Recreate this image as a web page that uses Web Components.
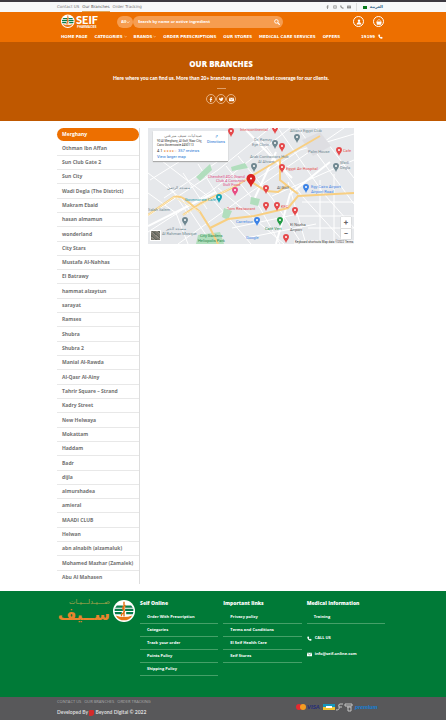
<!DOCTYPE html>
<html lang="en">
<head>
<meta charset="utf-8">
<meta name="viewport" content="width=device-width, initial-scale=1">
<title>Our Branches</title>
<style>
html{background:#58585a}
body{margin:0;background:#fff;font-family:"Open Sans","Noto Sans",sans-serif;
--orange:#ed6f00;--green:#007a37}
</style>
</head>
<body>
<seif-topbar></seif-topbar>
<seif-header></seif-header>
<page-banner><span slot="title">OUR BRANCHES</span>Here where you can find us. More than 20+ branches to provide the best coverage for our clients.</page-banner>
<page-main></page-main>
<seif-footer></seif-footer>
<seif-bottom></seif-bottom>
<script>
const BASE=`*{box-sizing:border-box}:host{display:block}a{color:inherit;text-decoration:none}ul{list-style:none;margin:0;padding:0}svg{display:block}
.wrap{max-width:332px;margin:0 auto;padding-right:4px;position:relative}`;
function define(name,css,html,init){
  customElements.define(name,class extends HTMLElement{
    constructor(){super();this.attachShadow({mode:'open'}).innerHTML='<style>'+BASE+css+'</style>'+html;}
    connectedCallback(){if(init)init.call(this,this.shadowRoot);}
  });
}
const F='<path d="M9 5h3V1H9C6 1 5 3 5 5v3H3v4h2v8h4v-8h3l1-4H9V6q0-1 0-1z"/>';
const TW='<path d="M1 16c6 3 15 0 15-9l2-3-2 .5L17 2l-3 1c-3-2-6 0-5 3-4 0-6-2-8-4-1 3 0 5 1 6l-2-.5c0 3 2 4 3 4.500H3c1 2 2 3 4 3-2 1-4 1.500-6 1z"/>';
const MAIL='<path d="M0 3h20v14H0z"/><path d="M1 4l9 7 9-7" fill="none" stroke="var(--bg)" stroke-width="2"/>';
const PHONE='<path d="M5 1 1 4c0 8 7 15 15 15l3-4-5-4-3 2c-2-1-3-2-4-4l2-3z"/>';
const LOGO=`<circle cx="20" cy="20" r="20" fill="#fff"/><path d="M7 10h11v4H4zM22 10h11l3 4H22zM3 16h15v4H3zM22 16h15v4H22zM3 22h13v4H4zM24 22h13l-1 4H24z" fill="#087c4a"/><path d="M20 3v27M16 29c-4-4 8-6 4-10s-2-8 3-9" fill="none" stroke="#e06d10" stroke-width="2.500"/><path d="M5 28q15 6 30 0c-6 12-24 12-30 0z" fill="#e97818"/>`;

define('seif-icon',`:host{width:5px;height:5px;flex:none}svg{width:100%;height:100%;fill:currentColor}`,'<svg viewBox="0 0 20 20"></svg>',function(r){
  r.querySelector('svg').innerHTML={f:F,tw:TW,mail:MAIL,phone:PHONE,
    insta:'<path d="M2 2h16v16H2zM6 6v8h8V6z" fill-rule="evenodd"/>',
    search:'<circle cx="8" cy="8" r="6" fill="none" stroke="currentColor" stroke-width="3"/><path d="m12 12 7 7" stroke="currentColor" stroke-width="4"/>',
    user:'<circle cx="10" cy="6" r="4"/><path d="M2 18c0-5 4-8 8-8s8 3 8 8z"/>',
    basket:'<path d="M5 8c0-8 10-8 10 0" fill="none" stroke="currentColor" stroke-width="2"/><path d="M1 8h18l-2 11H3z"/>',
    down:'<path d="m3 7 7 7 7-7" fill="none" stroke="currentColor" stroke-width="3"/>'}[this.getAttribute('name')];
});

define('seif-topbar',`:host{background:#f7f8f9;border-top:2px solid #3c3941;color:#777;--bg:#f7f8f9}
.wrap{display:flex;justify-content:space-between}nav,.r{display:flex;gap:3px;align-items:center;height:10px}
nav{font:4px/10px "DejaVu Sans",sans-serif}.on{box-shadow:inset 0 -1px #e0a55a;color:#555}
.r{color:#888;padding-right:2px}.r seif-icon{width:4px;height:4px}.sep{border-left:1px solid #ddd;height:8px;margin:0 3px 0 2px}.flag{width:4px;height:3px;background:#087a1c}.ar{color:#2d6285;font:bold 4px/10px "DejaVu Sans",sans-serif}`,
`<div class="wrap"><nav><a href="#">Contact US</a><a class="on" href="#">Our Branches</a><a href="#">Order Tracking</a></nav>
<div class="r"><seif-icon name="f"></seif-icon><seif-icon name="insta"></seif-icon><seif-icon name="phone"></seif-icon><seif-icon name="mail"></seif-icon><span class="sep"></span><span class="flag"></span><a class="ar" href="#" lang="ar">العربية</a></div></div>`);

define('seif-logo',`:host{width:40px;height:15px;flex:none}svg{width:100%;height:100%}text{font:900 11px Lato,sans-serif;fill:#fff}.s{font:bold 3px "Open Sans",sans-serif}`,
`<svg viewBox="0 0 40 15" role="img" aria-label="Seif Pharmacies"><g transform="translate(0 .5) scale(.34)">${LOGO}</g><text x="15" y="10">SEIF</text><text class="s" x="16" y="14">PHARMACIES</text></svg>`);

define('seif-header',`:host{background:var(--orange);color:#fff;--bg:var(--orange)}
.row{display:flex;align-items:center;height:19px;padding:0 1px 0 4px}
form{display:flex;margin-left:16px;flex:0 1 166px}
select{appearance:none;border:0;background:#f69d50;color:#fff;font:bold 4px "Open Sans",sans-serif;width:16px;height:12px;border-radius:6px;padding:0 4px;margin:0}
.cat{position:relative;display:flex}.cat seif-icon{position:absolute;right:3px;top:4px;width:4px;height:4px}
.box{display:flex;align-items:center;flex:1;min-width:0;background:#f69d50;border-radius:6px;height:12px;padding:0 3px 0 5px}
input{border:0;background:none;outline:0;color:#fff;font:bold 4px "Open Sans",sans-serif;padding:0;flex:1;min-width:0}input::placeholder{color:#fff;opacity:1}
button{border:0;background:none;color:#fff;padding:0;display:flex}button seif-icon{width:6px;height:6px}
.acts{margin-left:auto;display:flex;gap:9px}.acts button{width:11px;height:11px;border:1px solid #fff;border-radius:50%;align-items:center;justify-content:center}
.menu{display:flex;gap:7px;height:11px;align-items:center;padding:0 2px 0 4px;font:bold 4px/11px "DejaVu Sans",sans-serif;white-space:nowrap}.menu a{display:flex;align-items:center;gap:1px}.menu seif-icon{width:3px;height:3px}.menu .tel seif-icon{width:5px;height:5px}.menu .tel{margin-left:auto;gap:3px}`,
`<div class="wrap"><div class="row"><seif-logo></seif-logo><form onsubmit="return false"><span class="cat"><select aria-label="Category"><option>All</option></select><seif-icon name="down"></seif-icon></span><span class="box"><input aria-label="Search" placeholder="Search by name or active ingredient"><button aria-label="Search"><seif-icon name="search"></seif-icon></button></span></form>
<div class="acts"><button aria-label="Account"><seif-icon name="user"></seif-icon></button><button aria-label="Cart"><seif-icon name="basket"></seif-icon></button></div></div>
<nav class="menu"><a href="#">HOME PAGE</a><a href="#">CATEGORIES <seif-icon name="down"></seif-icon></a><a href="#">BRANDS <seif-icon name="down"></seif-icon></a><a href="#">ORDER PRESCRIPTIONS</a><a href="#">OUR STORES</a><a href="#">MEDICAL CARE SERVICES</a><a href="#">OFFERS</a><a class="tel" href="#">19199 <seif-icon name="phone"></seif-icon></a></nav></div>`);

define('page-banner',`:host{background:#bf5800;color:#fff;text-align:center;padding:16px 4px 17px 0;--bg:#bf5800}
h1{margin:0;font:800 8px/12px "Open Sans",sans-serif}p{margin:2px 0 0;font:900 5px/12px Lato,sans-serif}hr{width:9px;border:0;border-top:1px solid #df9f68;margin:4px auto 5px}
div{display:flex;justify-content:center}a{width:10px;height:10px;border:1px solid #e7b080;border-radius:50%;display:flex;align-items:center;justify-content:center;color:#fff}`,
`<h1><slot name="title"></slot></h1><p><slot></slot></p><hr><div><a href="#" aria-label="Facebook"><seif-icon name="f"></seif-icon></a><a href="#" aria-label="Twitter"><seif-icon name="tw"></seif-icon></a><a href="#" aria-label="Email"><seif-icon name="mail"></seif-icon></a></div>`);

define('branch-list',`:host{width:83px;flex:none;border-right:1px solid #ddd}
ul{display:flex;flex-direction:column;min-height:456px;font:bold 5px/13px "Open Sans",sans-serif;color:#727272}
li{flex:1;display:flex;flex-direction:column;justify-content:flex-end;border-bottom:1px solid #e8e8e8}li:last-child{border:0}a{display:block;padding-left:5px;white-space:nowrap}li.on{border:0;justify-content:flex-start}.on a{background:var(--orange);color:#fff;border-radius:7px}`,'<ul></ul>',function(r){
 r.querySelector('ul').innerHTML=['Merghany','Othman Ibn Affan','Sun Club Gate 2','Sun City','Wadi Degla (The District)','Makram Ebaid','hasan almamun','wonderland','City Stars','Mustafa Al-Nahhas','El Batrawy','hammat alzaytun','sarayat','Ramses','Shubra','Shubra 2','Manial Al-Rawda','Al-Qasr Al-Ainy','Tahrir Square – Strand','Kadry Street','New Helwaya','Mokattam','Haddam','Badr','dijla','almurshadea','amieral','MAADI CLUB','Helwan','abn alnabih (alzamaluk)','Mohamed Mazhar (Zamalek)','Abu Al Mahasen'].map((t,i)=>`<li${i?'':' class="on"'}><a href="#">${t}</a></li>`).join('');
});

const pin=(x,y,c,s=1)=>`<path transform="translate(${x} ${y}) scale(${s})" d="M0 3C-1-0-3-1-3-3a3 3 0 0 1 6 0C3-1 1 0 0 3z" fill="${c}"/><circle cx="${x}" cy="${y-3*s}" r="1" fill="#fff"/>`;
const R='#e5484a',G='#6f8790',B='#3b82e6';
const t=(x,y,s,c)=>`<text x="${x}" y="${y}" fill="${c}">${s}</text>`;
define('branch-map',`:host{width:206px;position:relative;overflow:hidden;line-height:0;align-self:flex-start}
svg{width:100%;height:auto}text{font:4px Roboto,sans-serif}
.card{position:absolute;left:5px;top:3px;width:75px;height:30px;background:#fff;box-shadow:0 1px 1px #aaa;font:3px/4px Roboto,sans-serif;color:#333;padding:1px 3px 0 4px;display:flex;justify-content:space-between;white-space:nowrap}
.card b{display:block;font:4px/7px "DejaVu Sans",sans-serif;text-align:right;color:#777}.card a,.card i{color:#1973d2;font-style:normal}.card a{display:block;font-size:4px;line-height:6px}.rate{font-size:4px;line-height:7px}.rate em{color:#e77c1a;font:3px "DejaVu Sans",sans-serif}
.card .dir{text-align:center;padding-top:2px;line-height:5px}.z{position:absolute;right:3px;bottom:5px;background:#fff;box-shadow:0 0 1px #999;width:10px}.z button{display:block;width:10px;height:11px;border:0;background:none;padding:0;font:bold 8px/10px Roboto,sans-serif;color:#666}.z button+button{border-top:1px solid #ddd}
.sat{position:absolute;left:2px;bottom:3px;width:11px;height:11px;border:1px solid #fff;background:repeating-linear-gradient(40deg,#77746b 0 2px,#8e8b82 2px 3px,#5f655c 3px 4px)}`,
`<svg viewBox="0 0 206 116" aria-label="Map of branches"><rect width="206" height="116" fill="#e6e8eb"/>
<g fill="none" stroke="#fff" stroke-width="1"><path d="M0 45l34 26 30 45M10 30l55 42 38 44M0 65l28 20 12 31M0 88l70-46 52-42M0 104l62-40 80-64M30 116l70-50 96-66M78 38l34 42 20 36M90 28l34 42 30 46M70 60l66 56M112 10l42 58 44 48M130 0l46 66 30 34M150 0l56 76M168 0l38 50M148 88h58M154 74h52M160 100h46M172 52v64M186 46v70M110 50l42-28 54-16M124 68l82-36M20 56l20 30M35 45l24 36M50 36l20 32M2 52l48-30M16 70l56-38M84 100l66-14M98 110l70-14M140 54l18 62"/></g>
<g fill="none" stroke="#fff" stroke-width="2"><path d="M0 98l68-34M96 0l48 50M104 76l24-52M128 116l14-50 40-32"/></g>
<path d="M48 49l14-13 2 6-12 11zM76 80l8 3-4 9-6-3zM103 69l9 2-2 7-8-2zM83 39l14-4 3 5-16 3zM50 107l22-3 4 12H48z" fill="#b1debd"/>
<path d="M154 12l18-8 11 14-18 10z" fill="#dedee2"/>
<g fill="none" stroke="#f8cf82" stroke-width="2"><path d="M0 87L26 69Q32 67 38 72L52 84 62 100 70 116M35 87L53 75 88 58 102 49 134 30 172 8M62 100L80 91 106 88 140 80 150 68 206 65M132 32L132 52 150 66M102 53L118 63 130 64 138 58"/></g><g fill="none" stroke="#fceabf" stroke-width="1"><path d="M0 87L26 69 52 84M35 87L102 49"/></g>
${pin(37,95,G)}${pin(71,72,'#16a5b5')}${pin(87,65,'#e84b83')}${pin(83,6,R)}${pin(106,41,G)}${pin(127,3,R)}${pin(149,12,G)}${pin(127,18,G)}${pin(134,21,R)}${pin(134,42,R)}${pin(118,80,R)}${pin(129,80,R)}${pin(147,85,R)}${pin(118,63,R)}${pin(188,41,G)}${pin(191,25,R)}${pin(158,62,B)}${pin(109,95,B)}${pin(132,95,'#249b45')}${pin(138,112,R)}
${pin(103,55,'#d92322',1.500)}
${t(19,61,'مسجد الرحمن',G)}${t(37,73,'Governorate Cafe',"#159aa9")}${t(60,50,'Cherchell 4DC Grand','#df4b83')}${t(68,54,'Club 4 Concepts','#df4b83')}${t(75,58,'Gulf Food','#df4b83')}${t(92,3,'Intercontinental',R)}${t(142,4,'Allianz Egypt Club',G)}${t(106,13,'Dr. Ramzy',G)}${t(104,18,'Eye Clinic',G)}${t(102,30,'Arab Contractors Hub',G)}${t(110,35,'Al Ahram',G)}${t(138,42,'Egypt Air Hospital',R)}${t(160,25,'Palm House',G)}${t(192,36,'Wadi',G)}${t(192,41,'Degla',G)}${t(195,24,'Cafe',R)}${t(129,61,'Al Golf','#555')}${t(163,60,'Egy Cairo Airport',B)}${t(163,65,'Airport Road',B)}${t(79,82,'Tom Restaurant',R)}${t(133,80,'KFC',R)}${t(18,102,'مسجد الخير',G)}${t(14,107,'Al Rahman Mosque',G)}${t(52,109,'City Gardens','#23884a')}${t(50,114,'Heliopolis Park','#23884a')}${t(117,102,'Café Vert','#23884a')}${t(142,98,'El Nozha','#555')}${t(142,103,'Airport','#555')}${t(88,95,'Carrefour',B)}${t(0,83,'Salah Salem',G)}${t(98,111,'Google',B)}
<rect x="146" y="112" width="60" height="4" fill="#f5f5f5"/><text x="147" y="115" style="font-size:3px" fill="#333">Keyboard shortcuts  Map data ©2022  Terms</text></svg>
<div class="card"><div><b lang="ar">صيدليات سيف ميرغني</b>90 Al Merghany, Al Golf, Nasr City,<br>Cairo Governorate 4450113<div class="rate">4.1 <em>★★★★☆</em> <i>357 reviews</i></div><a href="#">View larger map</a></div><a class="dir" href="#">↱<br>Directions</a></div>
<div class="sat"></div><div class="z"><button aria-label="Zoom in">+</button><button aria-label="Zoom out">−</button></div>`);

define('page-main',`.wrap{display:flex;gap:8px;padding-top:7px;padding-bottom:7px}`,'<div class="wrap"><branch-list></branch-list><branch-map></branch-map></div>');

define('footer-column',`:host{min-width:0;color:#fff}h2{font:800 5px/8px "Open Sans",sans-serif;margin:0 0 4px}::slotted(a){display:block;color:#fff;text-decoration:none;font:bold 4px/12px "Open Sans",sans-serif;border-bottom:1px solid #45a068;padding-left:7px;white-space:nowrap}
::slotted(a.c){border:0;display:flex;align-items:center;gap:3px;padding:4px 0 0}::slotted(a.first){padding-top:8px}`,'<h2><slot name="h"></slot></h2><slot></slot>');

define('seif-footer',`:host{background:var(--green);--bg:var(--green)}.wrap{display:grid;grid-template-columns:78px repeat(3,1fr);column-gap:5px;padding-top:8px;padding-bottom:21px}
.logo{width:100%}text{font-family:"DejaVu Sans",sans-serif;fill:#e9852d}`,
`<div class="wrap"><svg class="logo" viewBox="0 0 78 30" role="img" aria-label="صيدليات سيف"><text x="53" y="5" style="font-size:7px;fill:#a5a34d" direction="rtl">صـــيـدلـــيـات</text><text x="53" y="21" direction="rtl" style="font-size:16px;font-weight:bold">ســيف</text><g transform="translate(56 1) scale(.55)">${LOGO}</g></svg>
<footer-column><span slot="h">Seif Online</span><a href="#">Order With Prescription</a><a href="#">Categories</a><a href="#">Track your order</a><a href="#">Points Policy</a><a href="#">Shipping Policy</a></footer-column>
<footer-column><span slot="h">Important links</span><a href="#">Privacy policy</a><a href="#">Terms and Conditions</a><a href="#">El Seif Health Care</a><a href="#">Seif Stores</a></footer-column>
<footer-column><span slot="h">Medical Information</span><a href="#">Training</a><a class="c first" href="#"><seif-icon name="phone"></seif-icon>CALL US</a><a class="c" href="#"><seif-icon name="mail"></seif-icon>info@seif-online.com</a></footer-column></div>`);

define('seif-bottom',`:host{background:#58585a;color:#ccc;font:4px/10px "Open Sans",sans-serif;padding-bottom:3px}.wrap{display:flex;justify-content:space-between;align-items:center}nav{display:flex;gap:3px;color:#aaa}p{margin:0;font:bold 5px/10px Lato,sans-serif;color:#ddd}p i{display:inline-block;width:5px;height:6px;background:#d42b2b;vertical-align:middle;border-radius:1px 1px 3px 0}
svg{width:90px;height:10px}`,
`<div class="wrap"><div><nav><a href="#">CONTACT US</a><a href="#">OUR BRANCHES</a><a href="#">ORDER TRACKING</a></nav><p>Developed By <i></i> Beyond Digital © 2022</p></div>
<svg viewBox="0 0 90 10" role="img" aria-label="Payment methods"><circle cx="4" cy="5" r="3" fill="#e4292f"/><circle cx="8" cy="5" r="3" fill="#f49b22"/><text x="12" y="7" style="font:italic 900 6px Lato;fill:#252d78">VISA</text><path d="M28 2h12v3H28z" fill="#1696bd"/><path d="M28 5h12v3H28z" fill="#f1c22e"/><path d="M31 4h6v2h-6z" fill="#fff"/><path d="M48 2h-3q-2 0-1 3h3m-3 0q1 3-3 3M50 2h7v2h-7zM52 5h4v4h-3V5" fill="none" stroke="#c4c4c4"/><text x="60" y="7" style="font:italic 900 6px Lato;fill:#197dd0">premium</text></svg></div>`);
</script>
</body>
</html>
